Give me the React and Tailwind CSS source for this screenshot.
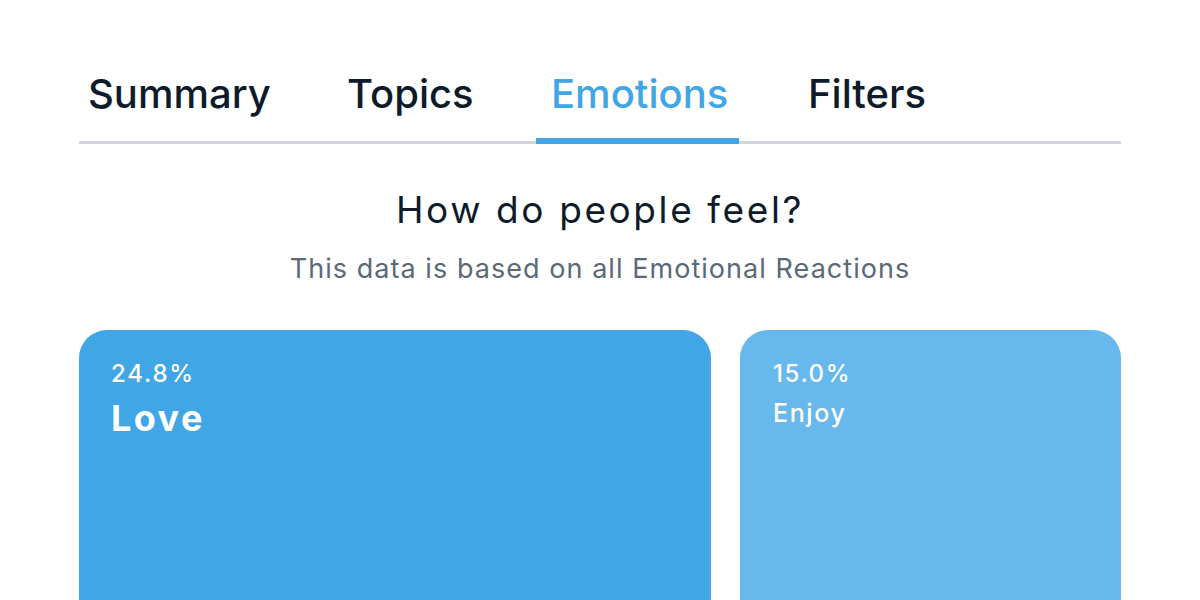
export default function App() {
  const tabs = [
    { t: "Summary", w: "w-[253px] pl-[9px]" },
    { t: "Topics", w: "w-[204px] pl-[15px]" },
    { t: "Emotions", w: "w-[203px] pl-[15px]" },
    { t: "Filters", w: "w-[200px] pl-[15px] ml-[54px]" },
  ];
  return (
    <div className="w-[1200px] h-[600px] bg-white overflow-hidden" style={{ fontFamily: "Inter, 'Noto Sans', sans-serif" }}>
      <div className="mx-[79px] pt-[70px]">
        <div className="flex border-b-[3px] border-[#d2d5d9]">
          {tabs.map(({ t, w }) => (
            <div
              key={t}
              className={
                w +
                " pb-[20px] text-[40px] leading-[48px] font-medium -mb-[3px] border-b-[6px] " +
                (t === "Emotions" ? "text-[#40a6e6] border-[#40a6e6]" : "text-[#0d1b2a] border-transparent")
              }
            >
              {t}
            </div>
          ))}
        </div>
        <div className="text-center mt-[42px] text-[37px] leading-[48px] tracking-[2.6px] text-[#0d1b2a] font-normal">How do people feel?</div>
        <div className="text-center mt-[19px] text-[27px] leading-[32px] tracking-[1.05px] text-[#5a6978]">This data is based on all Emotional Reactions</div>
        <div className="flex gap-[29px] mt-[45px]">
          <div className="w-[632px] h-[320px] rounded-[28px] bg-[#40a6e6] text-white pl-[32px] pt-[28px]">
            <div className="text-[24px] leading-[32px] font-medium tracking-[1.8px]">24.8%</div>
            <div className="text-[36px] leading-[44px] font-bold tracking-[2.4px] mt-[6px]">Love</div>
          </div>
          <div className="flex-1 h-[320px] rounded-[28px] bg-[#66b8ed] text-white pl-[33px] pt-[28px]">
            <div className="text-[24px] leading-[32px] font-medium tracking-[1.6px]">15.0%</div>
            <div className="text-[25px] leading-[32px] font-medium tracking-[1.6px] mt-[7px]">Enjoy</div>
          </div>
        </div>
      </div>
    </div>
  );
}
